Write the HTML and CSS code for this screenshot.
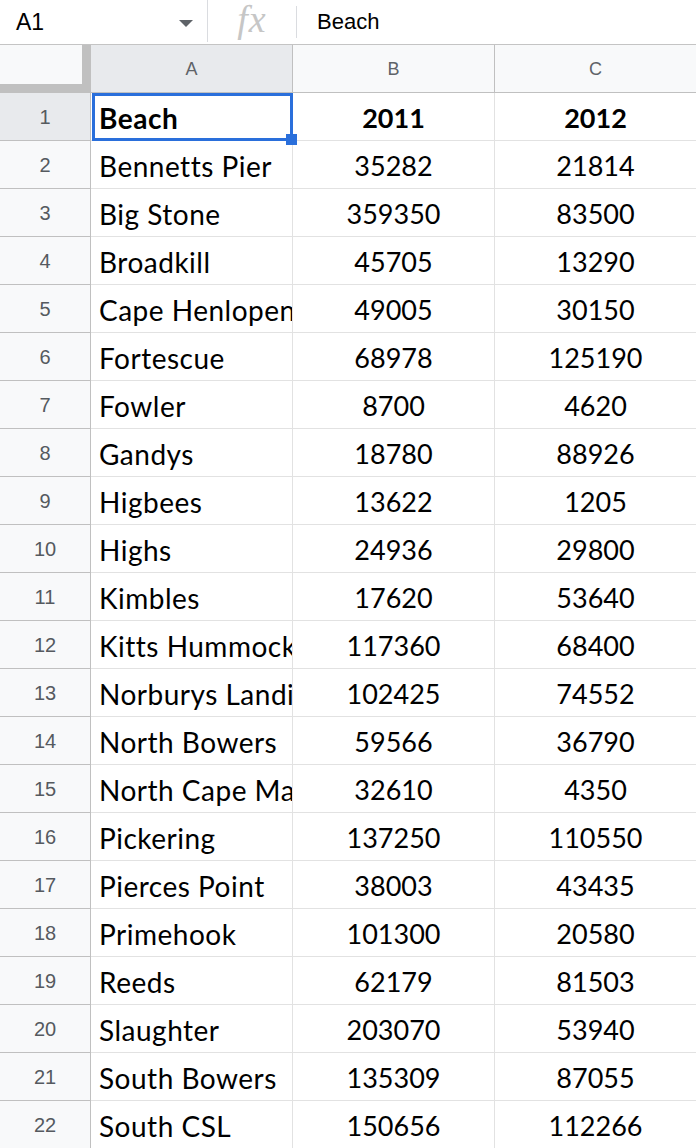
FILE: index.html
```html
<!DOCTYPE html>
<html>
<head>
<meta charset="utf-8">
<link rel="stylesheet" href="styles.css">
</head>
<body>
<div class="toolbar">
  <div class="namebox"><span class="ref">A1</span><span class="caret"></span></div>
  <div class="sep sep1"></div>
  <div class="fx">fx</div>
  <div class="sep sep2"></div>
  <div class="formula">Beach</div>
</div>
<div class="sheet">
  <div class="corner"><div class="corner-box"></div></div>
  <div class="colhead sel">A</div>
  <div class="colhead">B</div>
  <div class="colhead last">C</div>

  <div class="rowhead sel">1</div>
  <div class="cell text bold active">Beach<span class="selbox"></span><span class="handle"></span></div>
  <div class="cell num bold">2011</div>
  <div class="cell num bold last">2012</div>

  <div class="rowhead">2</div><div class="cell text">Bennetts Pier</div><div class="cell num">35282</div><div class="cell num last">21814</div>
  <div class="rowhead">3</div><div class="cell text">Big Stone</div><div class="cell num">359350</div><div class="cell num last">83500</div>
  <div class="rowhead">4</div><div class="cell text">Broadkill</div><div class="cell num">45705</div><div class="cell num last">13290</div>
  <div class="rowhead">5</div><div class="cell text">Cape Henlopen</div><div class="cell num">49005</div><div class="cell num last">30150</div>
  <div class="rowhead">6</div><div class="cell text">Fortescue</div><div class="cell num">68978</div><div class="cell num last">125190</div>
  <div class="rowhead">7</div><div class="cell text">Fowler</div><div class="cell num">8700</div><div class="cell num last">4620</div>
  <div class="rowhead">8</div><div class="cell text">Gandys</div><div class="cell num">18780</div><div class="cell num last">88926</div>
  <div class="rowhead">9</div><div class="cell text">Higbees</div><div class="cell num">13622</div><div class="cell num last">1205</div>
  <div class="rowhead">10</div><div class="cell text">Highs</div><div class="cell num">24936</div><div class="cell num last">29800</div>
  <div class="rowhead">11</div><div class="cell text">Kimbles</div><div class="cell num">17620</div><div class="cell num last">53640</div>
  <div class="rowhead">12</div><div class="cell text">Kitts Hummock</div><div class="cell num">117360</div><div class="cell num last">68400</div>
  <div class="rowhead">13</div><div class="cell text">Norburys Landing</div><div class="cell num">102425</div><div class="cell num last">74552</div>
  <div class="rowhead">14</div><div class="cell text">North Bowers</div><div class="cell num">59566</div><div class="cell num last">36790</div>
  <div class="rowhead">15</div><div class="cell text">North Cape May</div><div class="cell num">32610</div><div class="cell num last">4350</div>
  <div class="rowhead">16</div><div class="cell text">Pickering</div><div class="cell num">137250</div><div class="cell num last">110550</div>
  <div class="rowhead">17</div><div class="cell text">Pierces Point</div><div class="cell num">38003</div><div class="cell num last">43435</div>
  <div class="rowhead">18</div><div class="cell text">Primehook</div><div class="cell num">101300</div><div class="cell num last">20580</div>
  <div class="rowhead">19</div><div class="cell text">Reeds</div><div class="cell num">62179</div><div class="cell num last">81503</div>
  <div class="rowhead">20</div><div class="cell text">Slaughter</div><div class="cell num">203070</div><div class="cell num last">53940</div>
  <div class="rowhead">21</div><div class="cell text">South Bowers</div><div class="cell num">135309</div><div class="cell num last">87055</div>
  <div class="rowhead">22</div><div class="cell text">South CSL</div><div class="cell num">150656</div><div class="cell num last">112266</div>
</div>
</body>
</html>
```
FILE: styles.css
```css
* { box-sizing: border-box; }
html, body { margin: 0; padding: 0; background: #fff; }
body { width: 696px; height: 1148px; overflow: hidden; font-family: Roboto, "Liberation Sans", Arial, sans-serif; }

.toolbar {
  height: 45px;
  border-bottom: 1px solid #c4c4c4;
  display: flex;
  align-items: center;
  color: #000;
}
.namebox {
  width: 207px;
  display: flex;
  align-items: center;
  padding-left: 16px;
}
.ref { font-size: 23px; flex: 1; font-family: "Liberation Sans", Arial, sans-serif; }
.caret {
  width: 0; height: 0;
  border-left: 7px solid transparent;
  border-right: 7px solid transparent;
  border-top: 7px solid #5f6368;
  margin-right: 14px;
  margin-top: 2px;
}
.sep { width: 1px; background: #dadce0; }
.sep1 { height: 42px; align-self: flex-start; }
.sep2 { height: 32px; }
.fx {
  width: 88px;
  text-align: center;
  font-family: "Liberation Serif", "DejaVu Serif", serif;
  font-style: italic;
  font-size: 38px;
  color: #c6c6c6;
  line-height: 1;
  margin-top: -6px;
  letter-spacing: 1px;
}
.formula { padding-left: 20px; font-size: 22px; font-family: "Liberation Sans", Arial, sans-serif; }

.sheet {
  display: grid;
  grid-template-columns: 91px 202px 202px 202px;
  grid-auto-rows: 48px;
}
.corner {
  background: #c0c0c0;
  border-bottom: 1px solid #c0c0c0;
}
.corner-box { width: 82px; height: 39px; background: #f8f9fa; }
.colhead {
  background: #f8f9fa;
  border-right: 1px solid #c0c0c0;
  border-bottom: 1px solid #c0c0c0;
  display: flex;
  align-items: center;
  justify-content: center;
  font-family: "Liberation Sans", Arial, sans-serif;
  font-size: 18px;
  color: #5f6368;
  padding-top: 2px;
}
.colhead.sel { background: #e8eaed; }
.rowhead {
  background: #f8f9fa;
  border-right: 1px solid #c0c0c0;
  border-bottom: 1px solid #c0c0c0;
  display: flex;
  align-items: center;
  justify-content: center;
  font-family: "Liberation Sans", Arial, sans-serif;
  font-size: 20px;
  color: #555a5f;
  padding-top: 1px;
}
.rowhead.sel { background: #e8eaed; }
.cell {
  border-right: 1px solid #e2e2e2;
  border-bottom: 1px solid #e2e2e2;
  display: flex;
  align-items: center;
  white-space: nowrap;
  overflow: hidden;
  font-family: Lato, "Open Sans", sans-serif;
  font-size: 27px;
  color: #000;
  padding-top: 2px;
}
.cell.text { padding-left: 8px; font-size: 28px; letter-spacing: 0.5px; }
.cell.num { justify-content: center; }
.cell.bold { font-weight: bold; }
.cell.active { position: relative; overflow: visible; }
.selbox {
  position: absolute;
  left: 1px; top: 0;
  width: 201px; height: 48px;
  border: 3px solid #2a6fdb;
  pointer-events: none;
}
.handle {
  position: absolute;
  left: 195px; top: 41px;
  width: 11px; height: 11px;
  background: #2a6fdb;
  z-index: 2;
}
```
